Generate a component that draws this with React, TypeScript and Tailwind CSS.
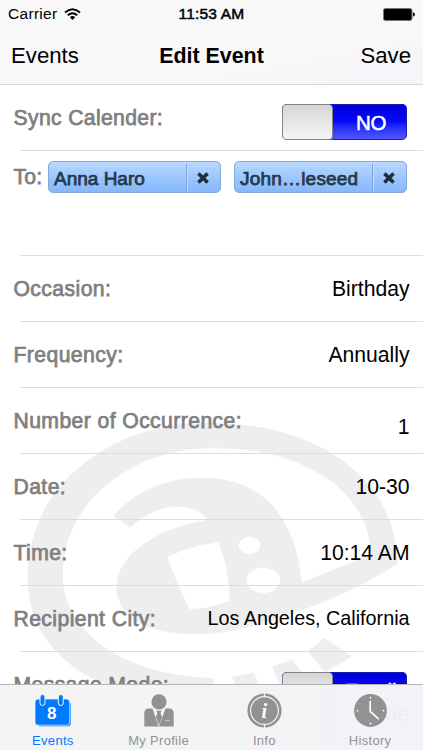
import React from "react";

const sans = "font-['Liberation_Sans',Arial,sans-serif]";
const medium = "[-webkit-text-stroke:0.75px_currentColor]";

function Toggle({ label, labelClass = "" }: { label: string; labelClass?: string }) {
  return (
    <div className="flex h-[36px] w-[125px] overflow-hidden rounded-[5px] bg-gradient-to-b from-[#0000d8] via-[#0808fa] to-[#5555ff]">
      <div className="h-full w-[51px] shrink-0 rounded-[4px] border border-[#858585] bg-gradient-to-b from-[#d6d6d6] to-[#f6f6f6]" />
      <div className="flex flex-1 items-center justify-center rounded-r-[5px] border border-l-0 border-[#1a1ab0] pt-[3px] pl-[3px]">
        <span className={`text-[20.5px] leading-none text-white [-webkit-text-stroke:0.5px_currentColor] ${labelClass}`}>{label}</span>
      </div>
    </div>
  );
}

function Chip({ name, nameClass = "" }: { name: string; nameClass?: string }) {
  return (
    <div className="flex h-[32px] w-[173px] items-center rounded-[5px] border border-[#82a8d6] bg-gradient-to-b from-[#b8d8ff] to-[#84b7fa]">
      <span className={`flex-1 whitespace-nowrap pl-[5px] pt-[2px] text-[19px] leading-none text-[#26384c] ${medium} ${nameClass}`}>{name}</span>
      <div className="flex h-[27px] w-[34px] items-center justify-center border-l border-[#7ea5d6] shadow-[inset_1px_0_0_#bfdcff]">
        <svg width="14" height="14" viewBox="0 0 14 14" className="-ml-px mt-px">
          <path d="M2.4 2.4L11.6 11.6M11.6 2.4L2.4 11.6" stroke="#222c38" strokeWidth="3.5" />
        </svg>
      </div>
    </div>
  );
}

function Row({ label, value, valueClass = "" }: { label: string; value: string; valueClass?: string }) {
  return (
    <div className="relative flex h-[66px] items-center justify-between pl-[13.5px] pr-[13.5px] text-[21.15px] after:absolute after:bottom-0 after:left-5 after:right-0 after:h-px after:bg-[#dcdcdf]">
      <span className={`whitespace-nowrap leading-none tracking-[0.42px] text-[#808080] ${medium}`}>{label}</span>
      <span className={`whitespace-nowrap leading-none text-black ${valueClass}`}>{value}</span>
    </div>
  );
}

function Watermark() {
  return (
    <svg className="absolute left-0 top-[400px]" width="423" height="290" viewBox="0 0 1269 870">
      <g className="drop-shadow-[0_2px_2px_rgba(0,0,0,0.07)]" fill="#eeeeef" fillRule="evenodd">
        <path d="M430 885C210 840 83 710 83 530C83 260 330 68 620 68C960 68 1190 240 1192 490C1100 550 970 610 870 640C780 675 680 700 580 700C430 700 350 640 350 560C350 470 460 385 625 360C600 310 480 290 390 382L342 345C410 270 500 233 610 233C800 233 890 370 905 548L1112 463C1110 270 910 142 640 142C390 142 188 310 188 520C188 700 370 825 640 835V885ZM502 470Q530 550 568 627Q630 626 690 602Q690 510 655 424Q570 435 502 470ZM716 435A33 27 0 1 0 782 435A33 27 0 1 0 716 435ZM739 540A51 39 0 1 0 841 540A51 39 0 1 0 739 540Z" />
        <path d="M925 753L973 715L1055 768L975 815ZM817 800L877 778L920 835L925 870H850ZM697 830L762 818L785 880H715Z" />
      </g>
    </svg>
  );
}

function CalendarIcon() {
  return (
    <svg width="36" height="33" viewBox="0 0 36 33">
      <path d="M4 8H33.5Q35.7 8 35.7 10V29Q35.7 32.3 32.5 32.3H4Z" fill="#007aff" />
      <rect x="0" y="5" width="34.6" height="26.2" rx="3" fill="#007aff" stroke="#f4f4f6" strokeWidth="0.7" />
      <g fill="#007aff" stroke="#f4f4f6" strokeWidth="1">
        <rect x="5" y="0.5" width="5" height="11" rx="2.5" />
        <rect x="23.3" y="0.5" width="5" height="11" rx="2.5" />
      </g>
      <text x="16.8" y="25" textAnchor="middle" fontSize="17" fontWeight="bold" fill="white" fontFamily="Liberation Sans, sans-serif">8</text>
    </svg>
  );
}

function ProfileIcon() {
  return (
    <svg width="30" height="33" viewBox="0 0 30 33" fill="#929292">
      <path d="M4 14.5H26Q29.7 15 29.7 19V32.5H0.3V19Q0.3 15 4 14.5Z" />
      <path d="M8.3 14L14.8 32.8L21.7 14Z" fill="#f4f4f6" />
      <circle cx="15" cy="7.9" r="8.3" fill="#f4f4f6" />
      <circle cx="15" cy="7.8" r="7.6" />
      <path d="M12.3 16.8H17.7L16.5 19.2L18.1 23L15 31.2L11.9 23L13.5 19.2Z" />
      <path d="M21 26.5H26" stroke="#cfcfcf" strokeWidth="0.8" />
    </svg>
  );
}

function InfoIcon() {
  return (
    <svg width="35" height="35" viewBox="0 0 35 35">
      <circle cx="17.5" cy="17.5" r="15.8" fill="none" stroke="#929292" strokeWidth="2.6" />
      <path d="M17.5 0V4M17.5 31V35" stroke="#f4f4f6" strokeWidth="1.3" />
      <circle cx="17.5" cy="17.5" r="13.3" fill="#929292" />
      <text x="17.3" y="24.6" textAnchor="middle" fontSize="20" fontWeight="bold" fontStyle="italic" fill="white" fontFamily="Liberation Serif, serif">i</text>
    </svg>
  );
}

function ClockIcon() {
  return (
    <svg width="33" height="33" viewBox="0 0 33 33" fill="#929292">
      <circle cx="16.5" cy="16.5" r="16.4" />
      <path d="M16.2 7.5V17.3L24.2 24.6" fill="none" stroke="white" strokeWidth="1.7" strokeLinecap="round" />
      <g fill="white">
        <circle cx="16.5" cy="3.7" r="0.9" />
        <circle cx="29.5" cy="16.7" r="0.9" />
        <circle cx="16.5" cy="29.5" r="0.9" />
        <circle cx="3.5" cy="16.7" r="0.9" />
      </g>
    </svg>
  );
}

function Tab({ label, active, children }: { label: string; active?: boolean; children: React.ReactNode }) {
  return (
    <div className={`relative flex flex-1 flex-col items-center ${active ? "text-[#007aff]" : "text-[#929292]"}`}>
      <div className="flex h-[48px] items-center justify-center pt-[3px]">{children}</div>
      <span className="whitespace-nowrap text-[13px] leading-[15px] tracking-[0.3px]">{label}</span>
    </div>
  );
}

export default function App() {
  return (
    <div className={`relative flex h-[750px] w-[423px] flex-col overflow-hidden bg-white ${sans}`}>
      <header className="h-[85px] shrink-0 border-b border-[#d6d6da] bg-gradient-to-br from-[#f8f8f8] from-70% to-[#f4f4fa]">
        <div className="grid h-[28px] grid-cols-3 items-center px-2 text-[15.5px] leading-none">
          <div className="flex items-center gap-[7px]">
            <span className="tracking-[0.3px]">Carrier</span>
            <svg width="17" height="12" viewBox="0 0 17 12" fill="none" stroke="black" strokeWidth="2">
              <path d="M1 4.5Q8.5 -2 16 4.5M3.8 7.3Q8.5 3.2 13.2 7.3" />
              <path d="M5.8 9.2Q8.5 7 11.2 9.2L8.5 12Z" fill="black" stroke="none" />
            </svg>
          </div>
          <span className="whitespace-nowrap text-center tracking-[0.2px] [-webkit-text-stroke:0.5px_currentColor]">11:53 AM</span>
          <svg className="justify-self-end" width="33" height="13" viewBox="0 0 33 13">
            <rect x="1.5" y="0.5" width="28.5" height="12" rx="2" fill="black" stroke="#777" />
            <path d="M31 4.2Q33 5 33 6.5T31 8.8Z" fill="black" />
          </svg>
        </div>
        <div className="grid h-[57px] grid-cols-3 items-center px-3 text-[22.2px] leading-none">
          <span className="-ml-px">Events</span>
          <span className="whitespace-nowrap text-center text-[21.4px] font-bold">Edit Event</span>
          <span className="pb-px text-right text-[22.2px]">Save</span>
        </div>
      </header>
      <Watermark />
      <main className="relative flex-1 overflow-hidden">
        <div className="relative flex h-[66px] items-center justify-between pl-[13.5px] pr-[16px] text-[21.15px] after:absolute after:bottom-0 after:left-5 after:right-0 after:h-px after:bg-[#dcdcdf]">
          <span className={`leading-none tracking-[0.36px] text-[#808080] ${medium}`}>Sync Calender:</span>
          <div className="pt-2"><Toggle label="NO" labelClass="tracking-[-0.3px]" /></div>
        </div>
        <div className="relative flex h-[105px] items-start pl-[13.5px] pt-[10px] text-[21.15px] after:absolute after:bottom-0 after:left-5 after:right-0 after:h-px after:bg-[#dcdcdf]">
          <span className={`w-[34.5px] pt-[5px] leading-none tracking-[0.2px] text-[#808080] ${medium}`}>To:</span>
          <div className="flex gap-[13px]">
            <Chip name="Anna Haro" />
            <Chip name="John…leseed" nameClass="tracking-[0.2px]" />
          </div>
        </div>
        <Row label="Occasion:" value="Birthday" />
        <Row label="Frequency:" value="Annually" />
        <Row label="Number of Occurrence:" value="1" valueClass="pt-3" />
        <Row label="Date:" value="10-30" />
        <Row label="Time:" value="10:14 AM" />
        <Row label="Recipient City:" value="Los Angeles, California" valueClass="text-[19.75px]" />
        <div className="flex h-[66px] justify-between pl-[13.5px] pr-[16px] pt-5 text-[21.15px]">
          <span className={`pt-[2px] leading-none tracking-[0.4px] text-[#808080] ${medium}`}>Message Mode:</span>
          <Toggle label="Email" />
        </div>
      </main>
      <nav className="relative flex h-[66px] shrink-0 border-t border-[#b5b5b7] bg-gradient-to-r from-[#f4f4f4] from-50% to-[#f2f2f9]">
        <span className="absolute right-[14px] top-[18px] text-[21px] leading-none text-[#ededf3]">None</span>
        <Tab label="Events" active><CalendarIcon /></Tab>
        <Tab label="My Profile"><ProfileIcon /></Tab>
        <Tab label="Info"><InfoIcon /></Tab>
        <Tab label="History"><ClockIcon /></Tab>
      </nav>
    </div>
  );
}
